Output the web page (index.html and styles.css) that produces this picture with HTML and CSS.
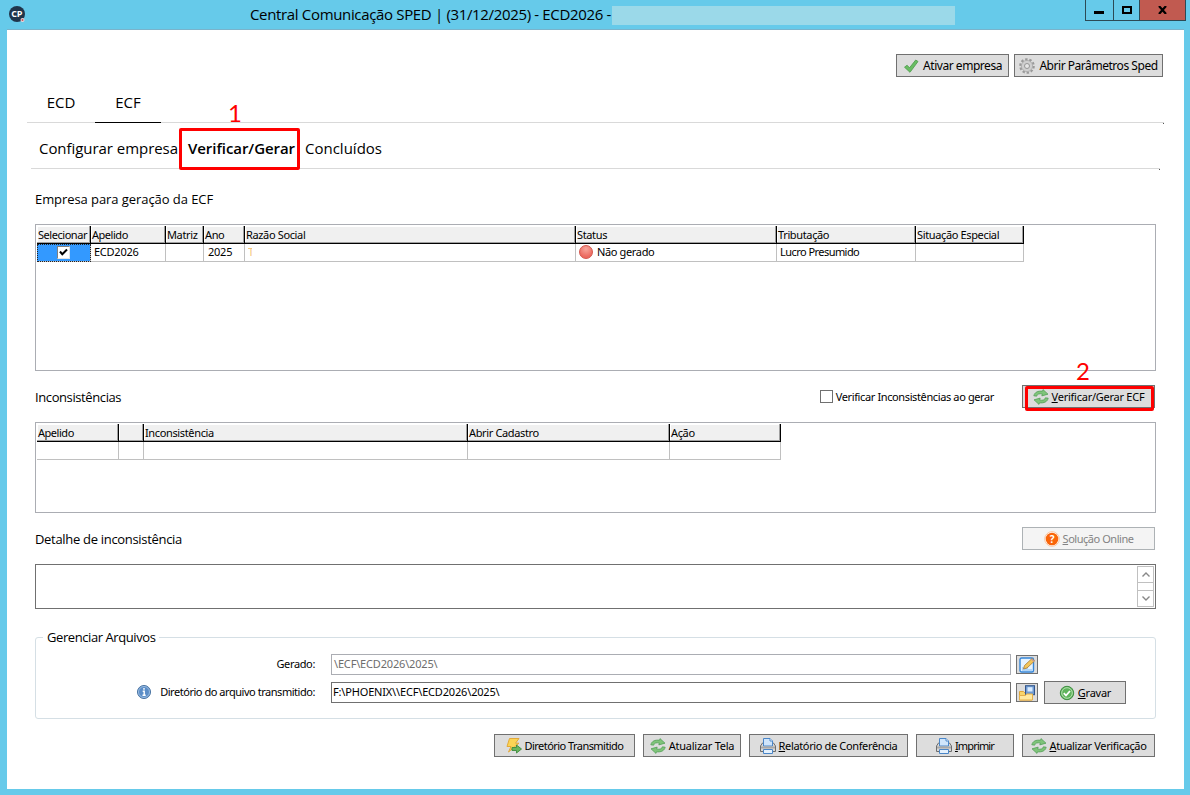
FILE: index.html
```html
<!DOCTYPE html>
<html lang="pt-BR">
<head>
  <meta charset="UTF-8">
  <title>Central Comunicação SPED</title>
  <link rel="stylesheet" href="styles.css">
</head>
<body>
  <!-- Icons used more than once -->
  <svg class="sprite">
    <symbol id="refresh" viewBox="0 0 16 16">
      <path d="M.8 6.800C1.500 3.300 5 1.600 9.500 2.200L10 .6l5 4.600-6.200 1.700.6-1.900C6.500 4.400 4 5 3.600 7.200z" fill="#7fc47a" stroke="#4a9a50" stroke-width=".7"/>
      <path d="M15.200 9.200C14.500 12.700 11 14.400 6.500 13.800L6 15.400l-5-4.600 6.200-1.700-.6 1.900C9.500 11.600 12 11 12.400 8.800z" fill="#7fc47a" stroke="#4a9a50" stroke-width=".7"/>
    </symbol>
    <symbol id="printer" viewBox="0 0 16 16">
      <path d="M2.500 5L.5 8v5.500h15V8l-2-3z" fill="#d8d8d8" stroke="#6e6e6e"/>
      <path d="M3.500 8V.5h6.500L12.500 3v5z" fill="#cfe5fb" stroke="#4a86c8"/>
      <path d="M10 .5V3h2.500" fill="#fff" stroke="#4a86c8"/>
      <path d="M1 8.500h14v2H1z" fill="#a8a8a8"/>
      <path d="M3.500 11.500h9v4h-9z" fill="#e4f1fd" stroke="#4a86c8"/>
    </symbol>
  </svg>

  <div class="window">
    <div class="titlebar">
      <svg class="app-icon" viewBox="0 0 16 16">
        <circle cx="8" cy="8" r="8" fill="#20354b"/>
        <text x="7.700" y="10.800" text-anchor="middle" class="app-text">CP</text>
        <circle cx="13.500" cy="14" r="2" fill="#ecd5d8"/>
        <circle cx="13.500" cy="14" r="1" fill="#c4545c"/>
      </svg>
      <span class="caption">Central Comunicação SPED | (31/12/2025) - ECD2026 -</span>
      <span class="redacted"></span>
      <div class="controls">
        <span class="min"><i></i></span>
        <span class="max"><i></i></span>
        <span class="close"><svg width="9" height="8" viewBox="0 0 9 8"><path d="M1 0l7 8M8 0L1 8" stroke="#000" stroke-width="2.200"/></svg></span>
      </div>
    </div>

    <div class="client">
      <div class="toolbar">
        <button class="btn big b-ativar">
          <svg width="16" height="16" viewBox="0 0 16 16"><path d="M1.500 9.200l2.600-2 2.400 2.600L12.700 2l2.300 1.500-8 10.800z" fill="#69bd63" stroke="#4a9a48" stroke-width=".8"/></svg>
          <span>Ativar empresa</span>
        </button>
        <button class="btn big b-param">
          <svg width="16" height="16" viewBox="0 0 16 16"><circle cx="8" cy="8" r="6.600" fill="none" stroke="#999" stroke-width="2.400" stroke-dasharray="2.400 1.750"/><circle cx="8" cy="8" r="5.600" fill="#cfcfcf" stroke="#a8a8a8" stroke-width=".8"/><circle cx="8" cy="8" r="2.500" fill="#e6e6e6" stroke="#969696"/></svg>
          <span>Abrir Parâmetros Sped</span>
        </button>
      </div>

      <div class="tabs">
        <span class="tab">ECD</span>
        <span class="tab active">ECF</span>
      </div>

      <div class="subtabs">
        <span class="st1">Configurar empresa</span>
        <span class="st2">Verificar/Gerar</span>
        <span class="st3">Concluídos</span>
      </div>

      <div class="content">
        <div class="heading first">Empresa para geração da ECF</div>

        <div class="grid companies">
          <table>
            <colgroup><col style="width:54px"><col style="width:75px"><col style="width:38px"><col style="width:41px"><col style="width:331px"><col style="width:201px"><col style="width:139px"><col style="width:108px"></colgroup>
            <tr>
              <th class="tight">Selecionar</th><th class="tight">Apelido</th><th>Matriz</th><th>Ano</th><th>Razão Social</th><th>Status</th><th>Tributação</th><th>Situação Especial</th>
            </tr>
            <tr>
              <td class="selected"><span class="check"><svg width="9" height="9" viewBox="0 0 9 9"><path d="M1 3.500l2.300 2.800L8 1.500" fill="none" stroke="#000" stroke-width="2"/></svg></span></td>
              <td class="wide">ECD2026</td>
              <td></td>
              <td class="year wide">2025</td>
              <td><span class="cut">T</span></td>
              <td><div class="status"><i class="ball"></i>Não gerado</div></td>
              <td class="tighter">Lucro Presumido</td>
              <td></td>
            </tr>
          </table>
        </div>

        <div class="heading">
          <span class="h-tight">Inconsistências</span>
          <label class="option"><i class="box"></i>Verificar Inconsistências ao gerar</label>
          <button class="btn w133"><svg width="16" height="16"><use href="#refresh"/></svg><span class="wide"><u>V</u>erificar/Gerar ECF</span></button>
        </div>

        <div class="grid issues">
          <table>
            <colgroup><col style="width:82px"><col style="width:25px"><col style="width:324px"><col style="width:202px"><col style="width:111px"></colgroup>
            <tr><th class="tight">Apelido</th><th></th><th>Inconsistência</th><th>Abrir Cadastro</th><th>Ação</th></tr>
            <tr><td></td><td></td><td></td><td></td><td></td></tr>
          </table>
        </div>

        <div class="heading">
          <span class="h-mid">Detalhe de inconsistência</span>
          <button class="btn w133 disabled">
            <svg width="16" height="16" viewBox="0 0 16 16"><circle cx="8" cy="8" r="7.300" fill="#fff" stroke="#f9b98b" stroke-width=".8"/><circle cx="8" cy="8" r="6.300" fill="#f9650a"/><text x="8" y="11.800" text-anchor="middle" class="mark">?</text></svg>
            <span class="tight"><u>S</u>olução Online</span>
          </button>
        </div>

        <div class="memo">
          <div class="scroll">
            <span><svg width="8" height="5" viewBox="0 0 8 5"><path d="M.5 4.500L4 1l3.500 3.500" fill="none" stroke="#888" stroke-width="1.400"/></svg></span>
            <span class="track"></span>
            <span><svg width="8" height="5" viewBox="0 0 8 5"><path d="M.5.5L4 4 7.500.5" fill="none" stroke="#888" stroke-width="1.400"/></svg></span>
          </div>
        </div>

        <fieldset>
          <legend>Gerenciar Arquivos</legend>
          <div class="file-row">
            <span class="file-label">Gerado:</span>
            <div class="field readonly">\ECF\ECD2026\2025\</div>
            <button class="mini">
              <svg width="16" height="16" viewBox="0 0 16 16"><rect x="1" y="1" width="13.500" height="14" rx="1.500" fill="#e6f3fe" stroke="#3585d8" stroke-width="1.400"/><path d="M3 11h6M3 13h10" stroke="#7db7ee"/><path d="M4.500 12l1-3.500 7.500-7 2.500 2.500-7.500 7z" fill="#f3c65a" stroke="#a77a35" stroke-width=".8"/><path d="M12 2.500l2.500 2.500 1-1L13 1.500z" fill="#c99a8c"/></svg>
            </button>
          </div>
          <div class="file-row second">
            <span class="file-label tight">
              <svg width="14" height="14" viewBox="0 0 14 14"><circle cx="7" cy="7" r="6.500" fill="#5b8dc7" stroke="#47719f"/><circle cx="7" cy="7" r="5.500" fill="none" stroke="#a9c8e8" stroke-width=".8"/><path d="M7 3v1.800M5.700 6.200H7.200v4M5.500 10.300h3.200" fill="none" stroke="#fff" stroke-width="1.400"/></svg>
              <span>Diretório do arquivo transmitido:</span>
            </span>
            <div class="field">F:\PHOENIX\\ECF\ECD2026\2025\</div>
            <button class="mini">
              <svg width="16" height="16" viewBox="0 0 16 16"><path d="M.5 15V6.500h4l1.500 1.500h7v7z" fill="#f8d56c" stroke="#dfa63a"/><rect x="6.500" y=".7" width="9" height="9" fill="#6f9bd2" stroke="#34568c"/><rect x="8.500" y="2.200" width="5" height="4.300" fill="#d9ecff"/><path d="M.5 15v-4.500h6l1-1.500H13.500v6z" fill="#ffe9a0" stroke="#e5b04a"/></svg>
            </button>
            <button class="btn b-gravar">
              <svg width="16" height="16" viewBox="0 0 16 16"><circle cx="8" cy="8" r="6.700" fill="#5fb45c" stroke="#3f8f42"/><circle cx="8" cy="8" r="5.300" fill="none" stroke="#b5e0b0"/><path d="M4.800 8.200L7 10.500l4-4.500" fill="none" stroke="#fff" stroke-width="1.800"/></svg>
              <span class="wide"><u>G</u>ravar</span>
            </button>
          </div>
        </fieldset>

        <div class="actions">
          <button class="btn w141">
            <svg width="16" height="16" viewBox="0 0 16 16"><path d="M3.500.5h9.500L9.500 5.200h3.500L2.500 14 5 8.500H1z" fill="#fbd455" stroke="#e2a83a"/><path d="M6 9.500h4.500V7l5 4-5 4v-2.500H6z" fill="#6ab55e" stroke="#3c8a3c" stroke-width=".9"/></svg>
            <span class="tighter">Diretório Transmitido</span>
          </button>
          <button class="btn w98"><svg width="16" height="16"><use href="#refresh"/></svg><span class="wide">Atualizar Tela</span></button>
          <button class="btn w159"><svg width="16" height="16"><use href="#printer"/></svg><span><u>R</u>elatório de Conferência</span></button>
          <button class="btn w98"><svg width="16" height="16"><use href="#printer"/></svg><span class="tightest"><u>I</u>mprimir</span></button>
          <button class="btn w133"><svg width="16" height="16"><use href="#refresh"/></svg><span><u>A</u>tualizar Verificação</span></button>
        </div>
      </div>
    </div>

    <!-- Step markers over the window -->
    <div class="marker m1"></div>
    <div class="num n1">1</div>
    <div class="marker m2"></div>
    <div class="num n2">2</div>
  </div>
</body>
</html>
```
FILE: styles.css
```css
* {
  box-sizing: border-box;
}
body {
  margin: 0;
  font-family: "Noto Sans", sans-serif;
  font-size: 11px;
  color: #000;
  letter-spacing: -0.36px;
}
.sprite {
  display: none;
}
/* Tracking steps for the small text */
.wide {
  letter-spacing: -0.25px;
}
.tight {
  letter-spacing: -0.46px;
}
.tighter {
  letter-spacing: -0.55px;
}
.tightest {
  letter-spacing: -0.85px;
}
.window {
  position: relative;
  width: 1190px;
  height: 795px;
  padding: 0 6px 6px 7px;
  background: #66caea;
  overflow: hidden;
}

/* Title bar */
.titlebar {
  display: flex;
  align-items: flex-start;
  height: 29px;
}
.app-icon {
  width: 16px;
  height: 16px;
  margin: 6px 0 0 2px;
  overflow: visible;
}
.app-text {
  font: bold 9px "Open Sans", sans-serif;
  fill: #fff;
}
.caption {
  width: 362px;
  margin-left: 225px;
  font: 15px/28px "Open Sans", sans-serif;
  white-space: nowrap;
  letter-spacing: -0.34px;
}
.redacted {
  width: 343px;
  height: 19px;
  margin-top: 6px;
  background: #9bd9e9;
}
.controls {
  display: flex;
  height: 21px;
  margin-left: auto;
  margin-right: -2px;
  border: 1px solid #2c4a55;
  border-top: none;
}
.controls span {
  display: flex;
  align-items: center;
  justify-content: center;
  width: 28px;
  border-right: 1px solid #2c4a55;
}
.controls .min {
  padding-right: 1px;
}
.controls .max {
  width: 26px;
}
.controls .close {
  width: 45px;
  background: #c15a50;
  border: none;
}
.min i {
  width: 10px;
  height: 3px;
  margin-top: 5px;
  background: #000;
}
.max i {
  width: 10px;
  height: 8px;
  border: 2px solid #000;
}

.client {
  height: 760px;
  background: #fff;
  border-top: 1px solid #7ab3cb;
}

/* Buttons */
.btn {
  display: flex;
  align-items: center;
  justify-content: center;
  gap: 3px;
  height: 23px;
  padding: 0;
  border: 1px solid #707070;
  background: #ddd;
  font: 11px "Noto Sans", sans-serif;
  color: #000;
  letter-spacing: -0.36px;
  white-space: nowrap;
}
.btn.big {
  gap: 4px;
  font-size: 12px;
  letter-spacing: -0.46px;
}
.btn.disabled {
  background: #f4f4f4;
  border-color: #adb2b5;
  color: #838383;
}
.w98 {
  width: 98px;
}
.w133 {
  width: 133px;
}
.w141 {
  width: 141px;
}
.w159 {
  width: 159px;
}
.toolbar {
  display: flex;
  justify-content: flex-end;
  gap: 5px;
  padding: 24px 21px 0 0;
}
.b-ativar {
  width: 113px;
}
.b-param {
  width: 149px;
}

/* Tabs */
.tabs,
.subtabs {
  position: relative;
  display: flex;
  height: 46px;
  border-bottom: 1px solid #d9d9d9;
  letter-spacing: 0;
  white-space: nowrap;
}
.tabs {
  margin: 0 20px;
  font: 15px/50px "Open Sans", sans-serif;
}
.tabs::after,
.subtabs::after {
  content: "";
  position: absolute;
  right: 0;
  bottom: -2px;
  width: 1px;
  height: 1px;
  background: #555;
}
.tab {
  width: 68px;
  height: 46px;
  text-align: center;
}
.tab.active {
  width: 66px;
  border-bottom: 1px solid #000;
}
.subtabs {
  margin: 0 24px;
  padding-left: 8px;
  font: 15px/51px "Open Sans", sans-serif;
}
.st1 {
  width: 149px;
  letter-spacing: -0.05px;
}
.st2 {
  width: 117px;
  font-weight: 600;
  letter-spacing: -0.06px;
}

.content {
  margin: 0 28px;
}
.heading {
  display: flex;
  align-items: center;
  height: 51px;
  font: 13px "Open Sans", sans-serif;
}
.heading.first {
  height: 55px;
  padding-top: 4px;
  letter-spacing: -0.07px;
}
.h-tight {
  letter-spacing: -0.4px;
}
.h-mid {
  letter-spacing: -0.31px;
}
.heading .btn {
  margin-left: auto;
  margin-right: 1px;
}
.option {
  display: flex;
  align-items: center;
  gap: 3px;
  margin-left: auto;
  font: 11px "Noto Sans", sans-serif;
  letter-spacing: -0.38px;
}
.heading .option + .btn {
  margin-left: 28px;
}
.box {
  width: 13px;
  height: 13px;
  border: 1px solid #707070;
}

/* Grids */
.grid {
  padding: 1px;
  border: 1px solid #abadb3;
}
.companies {
  height: 147px;
}
.issues {
  height: 91px;
}
.grid table {
  table-layout: fixed;
  width: 0;
  border-collapse: separate;
  border-spacing: 0;
}
.grid th {
  height: 18px;
  padding: 0 0 0 1px;
  background: #f0f0f0;
  border-right: 1px solid #000;
  border-bottom: 1px solid #000;
  box-shadow: inset -1px -1px #a0a0a0, inset 1px 1px #fff;
  font-weight: normal;
  text-align: left;
  line-height: 16px;
  white-space: nowrap;
}
.grid td {
  height: 18px;
  padding: 0 0 2px 3px;
  border-right: 1px solid #c0c0c0;
  border-bottom: 1px solid #c0c0c0;
  line-height: 15px;
}
.grid td.selected {
  padding: 0;
  background: #3399ff;
  outline: 1px dotted #222;
  outline-offset: -1px;
}
.check {
  display: flex;
  align-items: center;
  justify-content: center;
  width: 13px;
  height: 13px;
  margin: 0 auto;
  background: #fff;
  border: 1px solid #808080;
  border-right-color: #e3e3e3;
  border-bottom-color: #e3e3e3;
}
.cut {
  display: block;
  width: 4px;
  overflow: hidden;
  color: #f5c77c;
}
.grid td.year {
  padding-left: 4px;
}
.status {
  display: flex;
  align-items: center;
  gap: 4px;
  height: 15px;
}
.ball {
  width: 14px;
  height: 14px;
  border: 1px solid #d4554b;
  border-radius: 50%;
  background: radial-gradient(circle at 50% 25%, #f7a69b, #ec6a60 70%);
}

/* Detail box */
.memo {
  display: flex;
  justify-content: flex-end;
  height: 45px;
  padding: 1px;
  border: 1px solid #707070;
}
.scroll {
  display: flex;
  flex-direction: column;
  width: 17px;
  border: 1px solid #c0c0c0;
}
.scroll span {
  display: flex;
  align-items: center;
  justify-content: center;
  height: 16px;
}
.scroll .track {
  height: 9px;
  flex: none;
  border: 1px solid #c0c0c0;
  border-width: 1px 0;
}

/* Files */
fieldset {
  height: 91px;
  min-width: 0;
  margin: 19px 0 0;
  padding: 0;
  border: 1px solid #d5dfe5;
  border-radius: 3px;
}
legend {
  height: 18px;
  margin-left: 7px;
  padding: 0 4px;
  font: 13px/18px "Open Sans", sans-serif;
  letter-spacing: -0.42px;
}
.file-row {
  display: flex;
  align-items: center;
  height: 21px;
  margin-top: 8px;
}
.file-row.second {
  margin-top: 7px;
}
.file-label {
  display: flex;
  align-items: center;
  justify-content: flex-end;
  gap: 9px;
  width: 279px;
  margin-right: 16px;
  padding-bottom: 2px;
}
.field {
  width: 680px;
  height: 21px;
  padding-left: 1px;
  border: 1px solid #707070;
  line-height: 18px;
  letter-spacing: -0.17px;
}
.field.readonly {
  padding-left: 2px;
  border-color: #abadb3;
  color: #6d6d6d;
}
.mini {
  display: flex;
  align-items: center;
  justify-content: center;
  width: 22px;
  height: 19px;
  margin-left: 5px;
  padding: 0;
  border: 1px solid #707070;
  background: #ddd;
}
.b-gravar {
  width: 82px;
  margin-left: 6px;
}
.actions {
  display: flex;
  justify-content: flex-end;
  gap: 8px;
  margin-top: 15px;
  padding-right: 1px;
}

/* Step markers */
.marker {
  position: absolute;
  border: 3px solid #f00;
  border-radius: 2px;
}
.m1 {
  left: 179px;
  top: 128px;
  width: 121px;
  height: 42px;
}
.m2 {
  left: 1025px;
  top: 386px;
  width: 129px;
  height: 25px;
}
.num {
  position: absolute;
  font: 24px/24px Lato, sans-serif;
  color: #f00;
}
.n1 {
  left: 228px;
  top: 101px;
}
.n2 {
  left: 1076px;
  top: 359px;
}
.mark {
  font: bold 10px "Open Sans", sans-serif;
  fill: #fff;
}
```
